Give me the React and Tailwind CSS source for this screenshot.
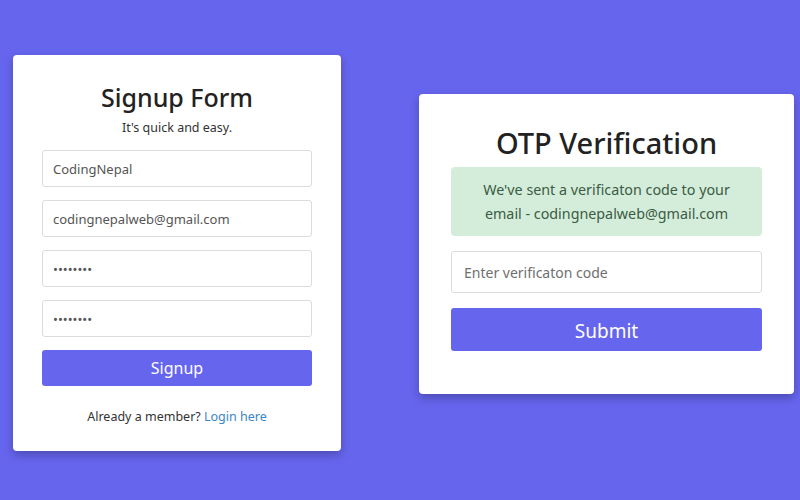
import React from 'react';

const font = { fontFamily: '"Noto Sans", "Open Sans", sans-serif' };

function Field({ value, type = 'text' }) {
  return (
    <input
      readOnly
      type={type}
      value={value}
      className="w-full h-[37px] px-[10px] border border-[#dcdcdc] rounded-[3px] text-[13px] text-[#555] outline-none"
    />
  );
}

export default function App() {
  return (
    <div className="w-[800px] h-[500px] bg-[#6665ee] overflow-hidden flex items-start" style={font}>
      <div className="ml-[13px] mt-[55px] w-[328px] h-[396px] bg-white rounded-[4px] shadow-[0_4px_10px_rgba(0,0,0,0.25)] px-[29px] pt-[24px] flex flex-col items-center">
        <h2 className="text-[25px] font-medium text-[#222] leading-[36px]">Signup Form</h2>
        <p className="text-[12.5px] text-[#333] mt-[3px] leading-[20px]">It's quick and easy.</p>
        <div className="w-full mt-[12px] flex flex-col gap-[13px]">
          <Field value="CodingNepal" />
          <Field value="codingnepalweb@gmail.com" />
          <Field type="password" value="password" />
          <Field type="password" value="password" />
          <button className="w-full h-[36px] rounded-[3px] bg-[#6665ee] text-white text-[16px]">Signup</button>
        </div>
        <p className="mt-[22px] text-[12.5px] text-[#333]">
          Already a member? <span className="text-[#3a85c8]">Login here</span>
        </p>
      </div>

      <div className="ml-[78px] mt-[94px] w-[375px] h-[300px] bg-white rounded-[4px] shadow-[0_4px_10px_rgba(0,0,0,0.25)] px-[32px] pt-[30px] flex flex-col items-center">
        <h2 className="text-[29px] font-medium text-[#222] leading-[38px]">OTP Verification</h2>
        <div className="w-full mt-[5px] h-[69px] bg-[#d4edda] rounded-[4px] flex items-center justify-center text-center text-[14.3px] leading-[24px] text-[#3b5b44]">
          We've sent a verificaton code to your<br />email - codingnepalweb@gmail.com
        </div>
        <input
          readOnly
          placeholder="Enter verificaton code"
          className="w-full mt-[15px] h-[42px] px-[12px] border border-[#dcdcdc] rounded-[3px] text-[14px] text-[#555] placeholder:text-[#6f6f6f] outline-none"
        />
        <button className="w-full mt-[15px] h-[43px] rounded-[3px] bg-[#6665ee] text-white text-[19px] pt-[3px]">Submit</button>
      </div>
    </div>
  );
}
